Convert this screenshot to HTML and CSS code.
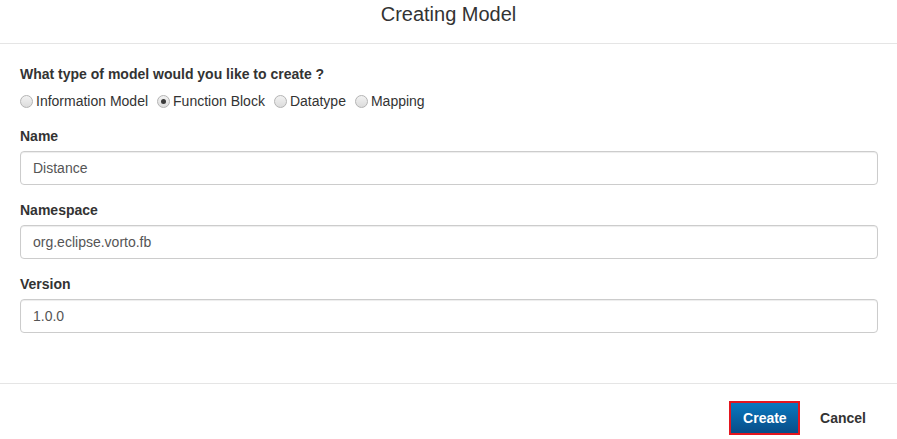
FILE: index.html
```html
<!DOCTYPE html>
<html>
<head>
<meta charset="utf-8">
<link rel="stylesheet" href="styles.css">
</head>
<body>
<div class="modal">
  <div class="modal-header">
    <h4 class="modal-title">Creating Model</h4>
  </div>
  <div class="modal-body">
    <div class="form-group">
      <label class="control-label">What type of model would you like to create ?</label>
      <div class="radios">
        <label class="radio-inline"><input type="radio" name="type"><span>Information Model</span></label>
        <label class="radio-inline"><input type="radio" name="type" checked><span>Function Block</span></label>
        <label class="radio-inline"><input type="radio" name="type"><span>Datatype</span></label>
        <label class="radio-inline"><input type="radio" name="type"><span>Mapping</span></label>
      </div>
    </div>
    <div class="form-group">
      <label class="control-label">Name</label>
      <input class="form-control" type="text" value="Distance">
    </div>
    <div class="form-group">
      <label class="control-label">Namespace</label>
      <input class="form-control" type="text" value="org.eclipse.vorto.fb">
    </div>
    <div class="form-group">
      <label class="control-label">Version</label>
      <input class="form-control" type="text" value="1.0.0">
    </div>
  </div>
  <div class="modal-footer">
    <button class="btn btn-primary">Create</button>
    <button class="btn btn-link">Cancel</button>
  </div>
</div>
</body>
</html>
```
FILE: styles.css
```css
* { box-sizing: border-box; }
html, body { margin: 0; padding: 0; background: #fff; }
body {
  font-family: "Liberation Sans", Arial, sans-serif;
  font-size: 14px;
  line-height: 20px;
  color: #333;
}
.modal { width: 897px; height: 439px; overflow: hidden; }
.modal-header {
  padding: 1px 15px 16px;
  border-bottom: 1px solid #e5e5e5;
}
.modal-title {
  margin: 0;
  text-align: center;
  font-size: 20px;
  font-weight: normal;
  line-height: 26px;
  color: #333;
}
.modal-body {
  padding: 20px 19px 0 20px;
  height: 339px;
}
.form-group { margin-bottom: 15px; }
.control-label {
  display: block;
  font-weight: bold;
  margin-bottom: 5px;
  color: #333;
}
.radios {
  display: flex;
  gap: 9px;
  height: 22px;
  padding-top: 2px;
  align-items: center;
}
.radio-inline {
  display: inline-flex;
  align-items: center;
  cursor: pointer;
  color: #333;
}
.radio-inline input {
  -webkit-appearance: none;
  appearance: none;
  width: 13px;
  height: 13px;
  margin: 0 3px 0 0;
  border: 1px solid #b4b4b4;
  border-radius: 50%;
  background: linear-gradient(#f2f2f2, #dcdcdc);
  position: relative;
}
.radio-inline input:checked::after {
  content: "";
  position: absolute;
  left: 3px;
  top: 3px;
  width: 5px;
  height: 5px;
  border-radius: 50%;
  background: #3a3a3a;
}
.form-control {
  display: block;
  width: 100%;
  height: 34px;
  padding: 6px 12px;
  font-family: inherit;
  font-size: 14px;
  line-height: 20px;
  color: #555;
  background: #fff;
  border: 1px solid #ccc;
  border-radius: 4px;
  box-shadow: inset 0 1px 1px rgba(0,0,0,0.075);
}
.modal-footer {
  border-top: 1px solid #e5e5e5;
  padding: 17px 18px 0 20px;
  display: flex;
  justify-content: flex-end;
  gap: 7px;
}
.btn {
  font-family: inherit;
  font-size: 14px;
  font-weight: bold;
  line-height: 20px;
  height: 34px;
  cursor: pointer;
}
.btn-primary {
  padding: 5px 12px;
  width: 71px;
  color: #fff;
  background: linear-gradient(#0a78bf, #084d88);
  border: 2px solid #e3161f;
  border-radius: 0;
}
.btn-link {
  padding: 6px 12px;
  color: #333;
  background: transparent;
  border: 1px solid transparent;
}
```
